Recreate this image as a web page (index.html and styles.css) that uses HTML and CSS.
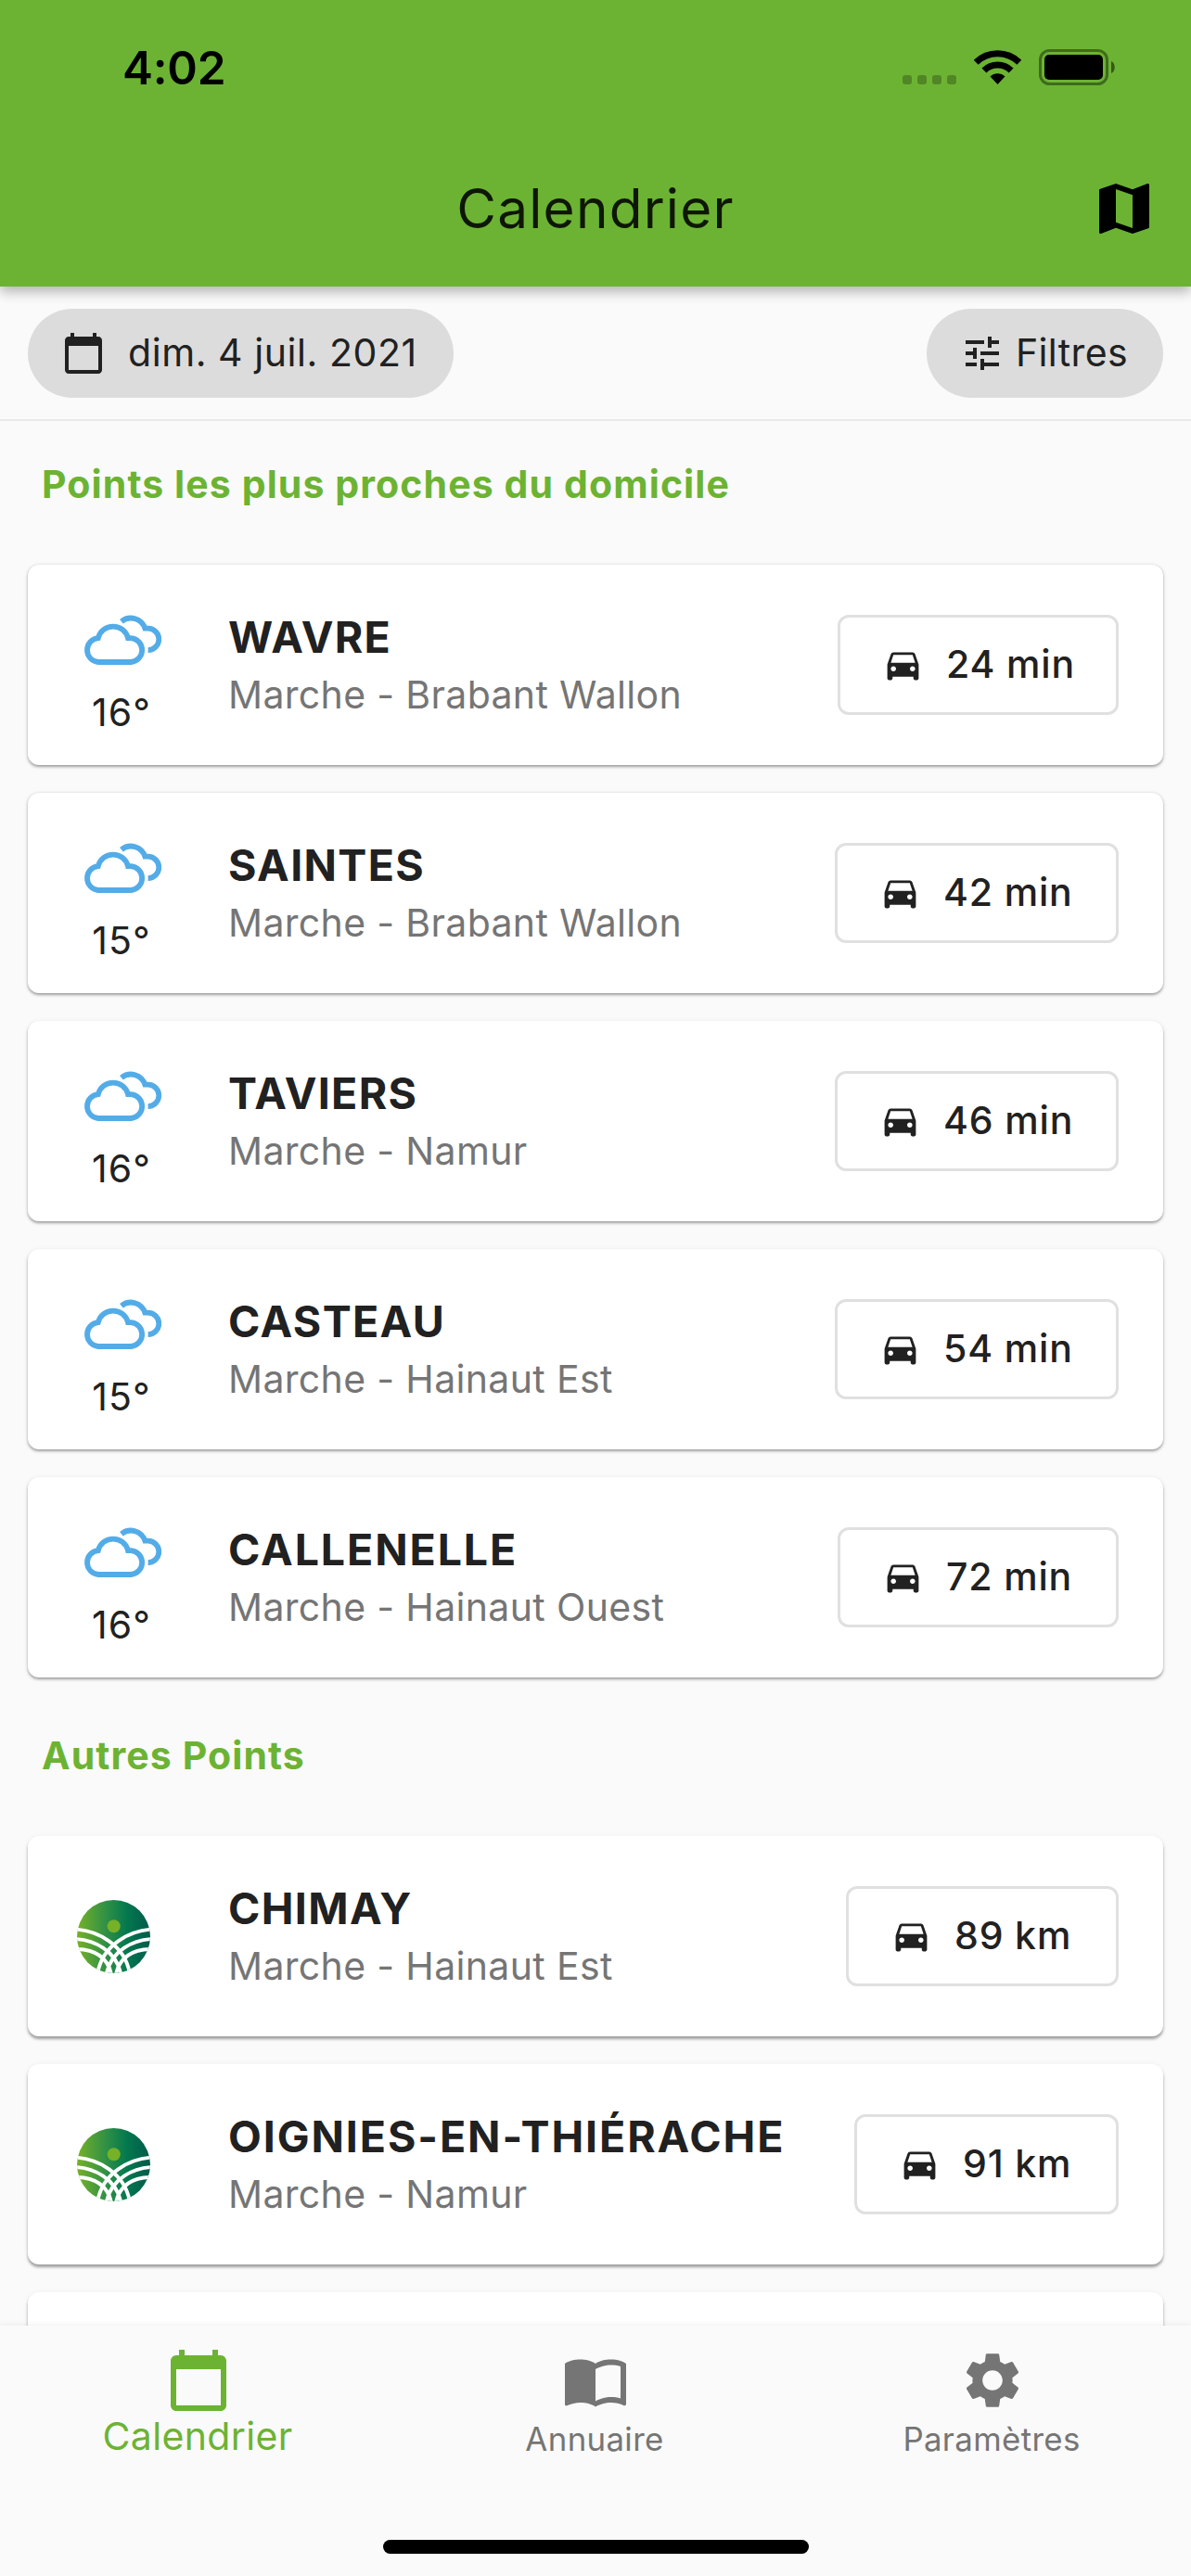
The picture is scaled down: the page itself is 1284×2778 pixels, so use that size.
FILE: index.html
```html
<!DOCTYPE html>
<html lang="fr">
<head>
<meta charset="utf-8">
<title>Calendrier</title>
<link rel="stylesheet" href="styles.css">
</head>
<body>
<svg class="defs" aria-hidden="true">
  <defs>
    <linearGradient id="leaf" x1="0" y1="0" x2="1" y2="0">
      <stop offset="0" stop-color="#76b128"/>
      <stop offset="0.4" stop-color="#2f9046"/>
      <stop offset="0.68" stop-color="#04784e"/>
      <stop offset="1" stop-color="#005a4c"/>
    </linearGradient>
    <clipPath id="disc"><circle cx="39.5" cy="39.5" r="39.5"/></clipPath>
    <symbol id="calendar" viewBox="0 0 24 24"><path d="M20 3h-1V1h-2v2H7V1H5v2H4c-1.1 0-2 .9-2 2v16c0 1.1.9 2 2 2h16c1.1 0 2-.9 2-2V5c0-1.1-.9-2-2-2zm0 18H4V8h16v13z"/></symbol>
    <symbol id="car" viewBox="0 0 24 24"><path d="M18.92 6.01C18.72 5.42 18.16 5 17.5 5h-11c-.66 0-1.21.42-1.42 1.01L3 12v8c0 .55.45 1 1 1h1c.55 0 1-.45 1-1v-1h12v1c0 .55.45 1 1 1h1c.55 0 1-.45 1-1v-8l-2.08-5.99zM6.5 16c-.83 0-1.5-.67-1.5-1.5S5.67 13 6.5 13s1.500.67 1.500 1.500S7.330 16 6.500 16zm11 0c-.83 0-1.500-.67-1.500-1.500s.67-1.500 1.500-1.500 1.500.67 1.500 1.500-.67 1.500-1.500 1.500zM5 11l1.500-4.500h11L19 11H5z"/></symbol>
    <symbol id="clouds" viewBox="0 0 84 55">
      <g fill="none" stroke="#53ace7" stroke-width="5.8">
        <path d="M51.300 52H15.900A13 13 0 0 1 15.800 26.100A16.600 16.600 0 0 1 48 26.100H51.300A13 13 0 0 1 51.300 52Z"/>
        <path d="M40.900 8.200A16 16 0 0 1 66.300 15.700H69.600A11.700 11.700 0 0 1 69.600 39.100"/>
      </g>
    </symbol>
    <symbol id="fields" viewBox="0 0 79 79">
      <circle cx="39.500" cy="39.500" r="39.500" fill="url(#leaf)"/>
      <circle cx="39.700" cy="28.300" r="7" fill="#76b128"/>
      <g clip-path="url(#disc)" fill="none" stroke="#fff" stroke-width="3.900">
        <path d="M-2 31.500C22 33 52 48 57 80M-2 42C18 43 42 54 47.500 80M-2 53C14 53 32 58 37 80"/>
        <path d="M81 31.500C57 33 27 48 22 80M81 42C61 43 37 54 31.500 80M81 53C65 53 47 58 42 80"/>
      </g>
    </symbol>
  </defs>
</svg>

<div class="screen">
  <header class="header">
    <div class="status">
      <span class="clock">4:02</span>
      <div class="indicators">
        <svg class="signal" viewBox="0 0 58 10"><g fill-opacity=".25"><rect width="10" height="10" rx="3"/><rect x="16" width="10" height="10" rx="3"/><rect x="32" width="10" height="10" rx="3"/><rect x="48" width="10" height="10" rx="3"/></g></svg>
        <svg class="wifi" viewBox="0 0 51 37"><g fill="none" stroke="#000" stroke-width="7"><path d="M2.200 13.200A33.200 33.200 0 0 1 48.800 13.200"/><path d="M10.900 22A20.700 20.700 0 0 1 40.100 22"/></g><path d="M25.500 37L17.500 28.600Q21 25.300 25.500 25.300T33.500 28.600Z"/></svg>
        <svg class="battery" viewBox="0 0 82 39"><rect x="1.500" y="1.500" width="72" height="36" rx="10" fill="none" stroke="#000" stroke-opacity=".4" stroke-width="3"/><rect x="6" y="6" width="63" height="27" rx="5"/><path d="M78 13c5 2 5 11 0 13z" fill-opacity=".5"/></svg>
      </div>
    </div>
    <div class="appbar">
      <h1 class="title">Calendrier</h1>
      <svg class="map" viewBox="0 0 24 24"><path d="M20.500 3l-.16.030L15 5.100 9 3 3.360 4.900c-.21.070-.36.250-.36.480V20.500c0 .28.220.500.500.500l.16-.030L9 18.900l6 2.100 5.640-1.900c.21-.070.36-.250.36-.480V3.500c0-.28-.22-.5-.5-.5zM15 19l-6-2.110V5l6 2.110V19z"/></svg>
    </div>
  </header>

  <div class="toolbar">
    <div class="chip chip-date"><svg class="icon48"><use href="#calendar"/></svg><span>dim. 4 juil. 2021</span></div>
    <div class="chip chip-filter"><svg class="icon48" viewBox="0 0 24 24"><path d="M3 17v2h6v-2H3zM3 5v2h10V5H3zm10 16v-2h8v-2h-8v-2h-2v6h2zM7 9v2H3v2h4v2h2V9H7zm14 4v-2H11v2h10zm-6-4h2V7h4V5h-4V3h-2v6z"/></svg><span>Filtres</span></div>
  </div>

  <main class="list">
    <h2 class="section">Points les plus proches du domicile</h2>
    <div class="cards">
      <article class="card depth1">
        <div class="weather"><svg class="cloud"><use href="#clouds"/></svg><span>16°</span></div>
        <div class="place"><h3>WAVRE</h3><p>Marche - Brabant Wallon</p></div>
        <div class="travel w303"><svg class="car"><use href="#car"/></svg><span>24 min</span></div>
      </article>
      <article class="card depth1">
        <div class="weather"><svg class="cloud"><use href="#clouds"/></svg><span>15°</span></div>
        <div class="place"><h3>SAINTES</h3><p>Marche - Brabant Wallon</p></div>
        <div class="travel w306"><svg class="car"><use href="#car"/></svg><span>42 min</span></div>
      </article>
      <article class="card depth2">
        <div class="weather"><svg class="cloud"><use href="#clouds"/></svg><span>16°</span></div>
        <div class="place"><h3>TAVIERS</h3><p>Marche - Namur</p></div>
        <div class="travel w306"><svg class="car"><use href="#car"/></svg><span>46 min</span></div>
      </article>
      <article class="card depth2">
        <div class="weather"><svg class="cloud"><use href="#clouds"/></svg><span>15°</span></div>
        <div class="place"><h3>CASTEAU</h3><p>Marche - Hainaut Est</p></div>
        <div class="travel w306"><svg class="car"><use href="#car"/></svg><span>54 min</span></div>
      </article>
      <article class="card depth2">
        <div class="weather"><svg class="cloud"><use href="#clouds"/></svg><span>16°</span></div>
        <div class="place"><h3 class="long">CALLENELLE</h3><p>Marche - Hainaut Ouest</p></div>
        <div class="travel w303"><svg class="car"><use href="#car"/></svg><span>72 min</span></div>
      </article>
    </div>
    <h2 class="section section-more">Autres Points</h2>
    <div class="cards">
      <article class="card depth3">
        <div class="brand"><svg class="logo"><use href="#fields"/></svg></div>
        <div class="place"><h3>CHIMAY</h3><p>Marche - Hainaut Est</p></div>
        <div class="travel w294"><svg class="car"><use href="#car"/></svg><span>89 km</span></div>
      </article>
      <article class="card depth3">
        <div class="brand"><svg class="logo"><use href="#fields"/></svg></div>
        <div class="place"><h3 class="long">OIGNIES-EN-THIÉRACHE</h3><p>Marche - Namur</p></div>
        <div class="travel w285"><svg class="car"><use href="#car"/></svg><span>91 km</span></div>
      </article>
      <article class="card depth3"></article>
    </div>
  </main>

  <footer class="bottom">
    <nav class="tabs">
      <div class="tab active"><svg class="icon72"><use href="#calendar"/></svg><span>Calendrier</span></div>
      <div class="tab"><svg class="icon72" viewBox="0 0 24 24"><path d="M21 5c-1.110-.35-2.330-.5-3.500-.5-1.950 0-4.050.4-5.500 1.500-1.450-1.100-3.550-1.500-5.500-1.500S2.450 4.900 1 6v14.650c0 .25.250.500.500.500.100 0 .150-.050.250-.050C3.100 20.450 5.050 20 6.500 20c1.950 0 4.050.4 5.500 1.500 1.350-.850 3.800-1.500 5.500-1.500 1.650 0 3.350.3 4.750 1.050.1.050.15.050.25.050.25 0 .5-.25.5-.5V6c-.6-.45-1.250-.75-2-1zm0 13.500c-1.100-.35-2.300-.5-3.500-.5-1.700 0-4.150.65-5.500 1.500V8c1.350-.85 3.800-1.500 5.500-1.500 1.200 0 2.400.15 3.500.5v11.500z"/></svg><span>Annuaire</span></div>
      <div class="tab"><svg class="icon72" viewBox="0 0 24 24"><path d="M19.140 12.940c.04-.3.060-.61.060-.94 0-.32-.02-.64-.07-.94l2.030-1.580c.18-.14.230-.41.120-.61l-1.920-3.320c-.12-.22-.37-.29-.59-.22l-2.390.96c-.5-.38-1.030-.7-1.620-.94l-.36-2.540c-.04-.24-.24-.41-.48-.41h-3.840c-.24 0-.43.17-.47.41l-.36 2.540c-.59.24-1.130.57-1.620.94l-2.390-.96c-.22-.08-.47 0-.59.22L2.740 8.870c-.12.210-.08.470.12.610l2.030 1.580c-.05.300-.09.630-.09.940s.02.640.07.940l-2.030 1.580c-.18.140-.23.410-.12.610l1.920 3.320c.12.220.37.290.59.220l2.390-.96c.5.380 1.030.7 1.620.94l.36 2.540c.05.240.24.410.48.410h3.840c.24 0 .44-.17.470-.41l.36-2.540c.59-.24 1.130-.56 1.620-.94l2.390.96c.22.080.47 0 .59-.22l1.920-3.320c.12-.22.070-.47-.12-.61l-2.010-1.580zM12 15.600c-1.980 0-3.600-1.620-3.600-3.600s1.620-3.600 3.600-3.600 3.600 1.620 3.600 3.600-1.620 3.600-3.600 3.600z"/></svg><span>Paramètres</span></div>
    </nav>
    <div class="home-bar"></div>
  </footer>
</div>
</body>
</html>
```

FILE: styles.css
```css
* { box-sizing: border-box; margin: 0; padding: 0; }

body {
  background: #fafafa;
  color: #212121;
  font-family: Inter, "Noto Sans", sans-serif;
  font-size: 41px;
}

svg { display: block; flex: none; fill: currentColor; }
.defs { width: 0; height: 0; position: absolute; }
.icon48 { width: 48px; height: 48px; }
.icon72 { width: 72px; height: 72px; }

.screen {
  width: 1284px;
  height: 2778px;
  display: flex;
  flex-direction: column;
  overflow: hidden;
}

/* Header */
.header {
  flex: none;
  height: 309px;
  background: #6cb333;
  color: #000;
  box-shadow: 0 6px 12px rgba(0, 0, 0, .2), 0 3px 16px rgba(0, 0, 0, .12);
}
.status {
  height: 141px;
  padding: 0 82px 0 132px;
  display: flex;
  justify-content: space-between;
  align-items: flex-start;
}
.clock {
  margin-top: 43px;
  font-size: 49.5px;
  line-height: 60px;
  font-weight: 600;
  letter-spacing: -.2px;
}
.indicators {
  height: 92px;
  display: flex;
  align-items: flex-end;
}
.signal { width: 58px; height: 10px; margin: 0 19px 1px 0; }
.wifi { width: 51px; height: 37px; margin: 0 19px 1px 0; }
.battery { width: 82px; height: 39px; }
.appbar {
  height: 168px;
  padding: 0 36px;
  display: grid;
  grid-template-columns: 72px 1fr 72px;
  align-items: center;
}
.title {
  grid-column: 2;
  margin-top: -1px;
  text-align: center;
  font-size: 58.5px;
  font-weight: 400;
  letter-spacing: 1.2px;
  color: rgba(0, 0, 0, .87);
}
.map { width: 72px; height: 72px; }

/* Date and filter chips */
.toolbar {
  flex: none;
  height: 145px;
  padding: 0 30px;
  border-bottom: 2px solid #e9e9e9;
  display: flex;
  align-items: center;
  justify-content: space-between;
}
.chip {
  height: 96px;
  border-radius: 48px;
  background: #dcdcdc;
  display: flex;
  align-items: center;
  line-height: 48px;
  white-space: nowrap;
}
.chip span { margin-top: -2px; }
.chip-date { width: 459px; padding-left: 36px; gap: 24px; letter-spacing: .56px; }
.chip-filter { width: 255px; padding-left: 36px; gap: 12px; letter-spacing: .36px; }

/* List */
.list { flex: 1; min-height: 0; overflow: hidden; }
.section {
  padding: 43px 45px 62px;
  font-size: 41px;
  line-height: 50px;
  font-weight: 700;
  letter-spacing: 1.1px;
  color: #6cb333;
}
.section-more { padding-top: 59px; }
.cards {
  padding: 0 30px;
  display: flex;
  flex-direction: column;
  gap: 30px;
}
.card {
  height: 216px;
  padding-right: 48px;
  border-radius: 12px;
  background: #fff;
  display: grid;
  grid-template-columns: 216px 1fr auto;
  align-items: center;
}
.depth1 { box-shadow: 0 1.5px 3px rgba(0, 0, 0, .34), 0 1px 6px rgba(0, 0, 0, .06); }
.depth2 { box-shadow: 0 2px 3px rgba(0, 0, 0, .34), 0 1px 6px rgba(0, 0, 0, .06); }
.depth3 { box-shadow: 0 3px 3px rgba(0, 0, 0, .34), 0 1px 6px rgba(0, 0, 0, .06); }

.weather {
  width: 84px;
  height: 216px;
  margin-left: 60px;
  padding-top: 53px;
  display: flex;
  flex-direction: column;
  align-items: center;
  gap: 26px;
}
.weather span { line-height: 50px; letter-spacing: 1px; margin-right: 2px; }
.cloud { width: 84px; height: 55px; }
.brand { padding: 1px 0 0 53px; }
.logo { width: 79px; height: 79px; }

.place { height: 216px; padding-top: 50px; white-space: nowrap; }
.place h3 {
  font-size: 46.5px;
  line-height: 56px;
  font-weight: 700;
  letter-spacing: 1.35px;
}
.place .long { letter-spacing: 1.9px; }
.place p {
  margin-top: 10px;
  line-height: 48px;
  letter-spacing: .34px;
  color: #757575;
}

.travel {
  height: 108px;
  padding: 0 0 2px 45px;
  border: 3px solid #e0e0e0;
  border-radius: 12px;
  display: flex;
  align-items: center;
  gap: 24px;
  font-weight: 500;
  letter-spacing: .85px;
  white-space: nowrap;
}
.car { width: 45px; height: 45px; }
.w303 { width: 303px; }
.w306 { width: 306px; }
.w294 { width: 294px; }
.w285 { width: 285px; }

/* Bottom navigation */
.bottom {
  flex: none;
  height: 270px;
  background: #fafafa;
  box-shadow: 0 0 8px rgba(0, 0, 0, .08);
}
.tabs {
  height: 231px;
  padding-top: 23px;
  display: grid;
  grid-template-columns: repeat(3, 1fr);
}
.tab {
  display: flex;
  flex-direction: column;
  align-items: center;
  gap: 2px;
  color: #757575;
  font-size: 34.8px;
  line-height: 50px;
  letter-spacing: .35px;
}
.tab span { margin-right: 2px; }
.active { gap: 0; color: #6cb333; font-size: 41px; }
.active span { margin-top: -1px; }
.home-bar {
  width: 459px;
  height: 15px;
  margin: 0 auto;
  border-radius: 8px;
  background: #000;
}
```
